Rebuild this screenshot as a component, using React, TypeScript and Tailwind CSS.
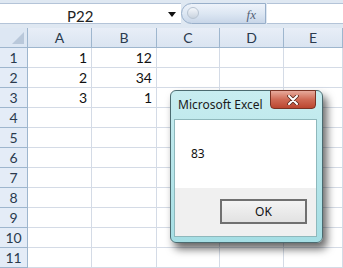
import { Fragment } from "react";

const COLS = ["A", "B", "C", "D", "E"];

const DATA: Record<number, [string, string]> = {
  1: ["1", "12"],
  2: ["2", "34"],
  3: ["3", "1"],
};

const ROWS = [1, 2, 3, 4, 5, 6, 7, 8, 9, 10, 11];

export default function App() {
  return (
    <div className="relative w-[343px] h-[268px] overflow-hidden bg-white font-['Lato',sans-serif]">
      {/* ── Formula bar ── */}
      <div className="h-[28px] bg-[#dfe8f2] pt-[3px] pb-[3px] flex">
        <div className="w-[181px] h-[21px] bg-white border-y border-[#b4c4d8] flex items-center relative">
          <span className="absolute left-[67px] top-[1px] text-[15px] text-[#222]">P22</span>
          <svg className="absolute left-[168px] top-[8px]" width="8" height="5" viewBox="0 0 8 5">
            <path d="M0 0h8L4 5z" fill="#111" />
          </svg>
        </div>
        <div className="w-[85px] h-[21px] rounded-l-full border border-[#98afca] bg-gradient-to-b from-[#eef3fa] via-[#dde7f3] to-[#c8d6e8] relative">
          <span className="absolute left-[5px] top-[3px] w-[12px] h-[12px] rounded-full bg-gradient-to-b from-[#f4f7fb] to-[#c9d3df] border border-[#b8c4d2]" />
          <span className="absolute right-[9px] top-[1px] text-[13px] italic font-['Liberation_Serif',serif] text-[#556377]">
            fx
          </span>
        </div>
        <div className="flex-1 h-[21px] bg-white border-y border-[#b4c4d8] ml-[1px]" />
      </div>

      {/* ── Grid ── */}
      <div className="grid grid-cols-[28px_64px_65px_63px_64px_59px]">
        <div className="h-[20px] bg-[#dde7f3] border-r border-b border-[#9eb6ce] relative">
          <svg className="absolute right-[3px] bottom-[3px]" width="12" height="12" viewBox="0 0 12 12">
            <path d="M12 0V12H0z" fill="#b9c8da" />
          </svg>
        </div>
        {COLS.map((c) => (
          <div
            key={c}
            className="h-[20px] bg-gradient-to-b from-[#e8eef7] to-[#dae4f1] border-r border-b border-[#9eb6ce] flex items-center justify-center text-[14px] text-[#2a3a4e]"
          >
            {c}
          </div>
        ))}
        {ROWS.map((r) => (
          <Fragment key={r}>
            <div className="h-[20px] bg-[#e4ecf7] border-r border-b border-[#9eb6ce] flex items-center justify-center text-[14px] text-[#2a3a4e]">
              {r}
            </div>
            {COLS.map((c, i) => (
              <div
                key={c}
                className="h-[20px] border-r border-b border-[#d4dbe6] flex items-center justify-end pr-[4px] text-[14px] text-[#111]"
              >
                {i < 2 && DATA[r] ? DATA[r][i] : ""}
              </div>
            ))}
          </Fragment>
        ))}
      </div>

      {/* ── Message box ── */}
      <div className="absolute left-[170px] top-[90px] w-[153px] h-[153px] rounded-[6px] border border-[#4c6b70] bg-gradient-to-b from-[#c8edf0] to-[#a5dee4] shadow-[4px_6px_8px_rgba(0,0,0,0.6)] font-['Noto_Sans',sans-serif]">
        <span className="absolute left-[7px] top-[5px] text-[12px] text-[#1a1a1a]">Microsoft Excel</span>
        <div className="absolute right-[6px] top-[-1px] w-[46px] h-[19px] rounded-b-[4px] border border-[#7a3324] bg-gradient-to-b from-[#e6aa9c] via-[#cf6a55] to-[#bb4630] flex items-center justify-center">
          <svg width="12" height="10" viewBox="0 0 12 10">
            <path d="M2 1l8 8M10 1l-8 8" stroke="#5a2a1e" strokeWidth="3.6" strokeLinecap="round" />
            <path d="M2 1l8 8M10 1l-8 8" stroke="#fff" strokeWidth="2" strokeLinecap="round" />
          </svg>
        </div>
        <div className="absolute left-[3px] right-[5px] top-[28px] h-[118px] border border-[#8fb8bc] flex flex-col">
          <div className="h-[68px] bg-white pl-[16px] pt-[25px] text-[12px] text-[#111]">83</div>
          <div className="flex-1 bg-[#f0f0f0] pl-[45px] pt-[11px]">
            <div className="w-[87px] h-[25px] border-2 border-[#707070] bg-gradient-to-b from-[#f4f4f4] to-[#e2e2e2] flex items-center justify-center text-[12px] text-[#111]">
              OK
            </div>
          </div>
        </div>
      </div>
    </div>
  );
}
